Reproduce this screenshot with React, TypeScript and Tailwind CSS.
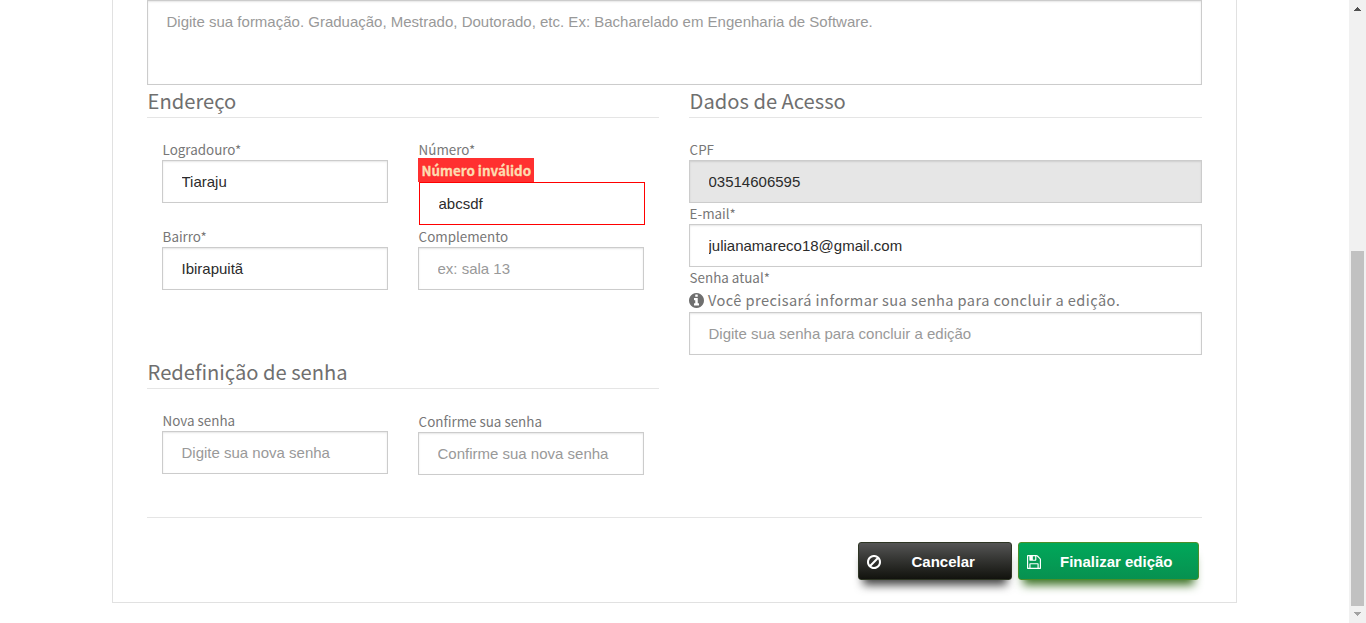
import React from "react";

const SANS = "font-['Noto_Sans_CJK_JP',sans-serif]";

function FaIcon({ d, className }: { d: string; className: string }) {
  return (
    <svg viewBox="0 128 1536 1536" fill="currentColor" className={className} aria-hidden="true">
      <path d={d} />
    </svg>
  );
}

const INFO =
  "M1024 1376v-160q0-14-9-23t-23-9h-96v-512q0-14-9-23t-23-9h-320q-14 0-23 9t-9 23v160q0 14 9 23t23 9h96v320h-96q-14 0-23 9t-9 23v160q0 14 9 23t23 9h448q14 0 23-9t9-23zM896 480v-160q0-14-9-23t-23-9h-192q-14 0-23 9t-9 23v160q0 14 9 23t23 9h192q14 0 23-9t9-23zM1536 896q0 209-103 385.5t-279.5 279.5-385.5 103-385.5-103-279.5-279.5-103-385.5 103-385.5 279.5-279.5 385.5-103 385.5 103 279.5 279.5 103 385.5z";
const BAN =
  "M1312 893q0-161-87-295l-754 753q137 89 297 89 111 0 211.5-43.5t173.5-116.5 116-174.5 43-212.5zM313 1192l755-754q-135-91-300-91-148 0-273 73t-198 199-73 274q0 162 89 299zM1536 893q0 157-61 300t-163.5 246-245 164-298.5 61-298.5-61-245-164-163.5-246-61-300 61-299.5 163.5-245.5 245-164 298.5-61 298.5 61 245 164 163.5 245.5 61 299.5z";
const SAVE =
  "M384 1536h768v-384h-768v384zM1280 1536h128v-896q0-14-10-38.5t-20-34.5l-281-281q-10-10-34-20t-39-10v416q0 40-28 68t-68 28h-576q-40 0-68-28t-28-68v-416h-128v1280h128v-416q0-40 28-68t68-28h832q40 0 68 28t28 68v416zM896 608v-320q0-13-9.5-22.5t-22.5-9.5h-192q-13 0-22.5 9.5t-9.5 22.5v320q0 13 9.5 22.5t22.5 9.5h192q13 0 22.5-9.5t9.5-22.5zM1536 640v928q0 40-28 68t-68 28h-1344q-40 0-68-28t-28-68v-1344q0-40 28-68t68-28h928q40 0 88 20t76 48l280 280q28 28 48 76t20 88z";

function Label({ children, short }: { children: React.ReactNode; short?: boolean }) {
  return (
    <label
      className={`${SANS} block whitespace-nowrap pl-[0.6px] text-[13.4px] leading-[21px] text-[#777] ${short ? "h-[19px]" : "h-[21px]"}`}
    >
      {children}
    </label>
  );
}

type InputProps = { value?: string; placeholder?: string; variant?: "normal" | "disabled" | "error" };

function Input({ value, placeholder, variant = "normal" }: InputProps) {
  const look = {
    normal: "border-[#ccc] bg-white shadow-[inset_0_1px_2px_rgba(0,0,0,0.1)]",
    disabled: "border-[#ccc] bg-[#e6e6e6] shadow-[inset_0_1px_2px_rgba(0,0,0,0.1)]",
    error: "border-[#f00] bg-white",
  }[variant];
  return (
    <input
      defaultValue={value}
      placeholder={placeholder}
      readOnly={variant === "disabled"}
      className={`block h-[43px] w-full rounded-none border px-[18.5px] font-['Liberation_Sans',sans-serif] text-[15px] text-[#2b2b2b] outline-none placeholder:text-[#999] ${look}`}
    />
  );
}

function Heading({ children }: { children: React.ReactNode }) {
  return (
    <h2
      className={`${SANS} h-[33px] whitespace-nowrap border-b border-[#e5e5e5] pl-[0.6px] text-[20.15px] leading-[32px] text-[#6f6f6f]`}
    >
      {children}
    </h2>
  );
}

export default function App() {
  return (
    <div className="flex h-[623px] w-full overflow-hidden bg-white">
      <div className="flex-1 pl-28">
        <main className="flex h-[603px] w-[1125px] flex-col border-x border-b border-[#e1e1e1] px-[34px]">
          <textarea
            placeholder="Digite sua formação. Graduação, Mestrado, Doutorado, etc. Ex: Bacharelado em Engenharia de Software."
            className="block h-[85px] w-full shrink-0 resize-none border border-[#ccc] px-[18.5px] py-[10px] font-['Liberation_Sans',sans-serif] text-[15px] leading-[22px] shadow-[inset_0_1px_2px_rgba(0,0,0,0.1)] outline-none placeholder:text-[#999]"
          />
          <div className="flex h-[432px] gap-[30px]">
            <div className="w-[512px]">
              <section>
                <Heading>Endereço</Heading>
                <div className="flex gap-[30px] px-[15px] pt-[21px]">
                  <div className="w-[226px]">
                    <Label>Logradouro*</Label>
                    <Input value="Tiaraju" />
                    <div className="pt-[23px]">
                      <Label>Bairro*</Label>
                      <Input value="Ibirapuitã" />
                    </div>
                  </div>
                  <div className="w-[226px]">
                    <Label short>Número*</Label>
                    <div
                      className={`${SANS} h-6 w-[116px] whitespace-nowrap bg-[#ff3030] pl-[3.5px] text-[13.4px] font-bold leading-[25px] text-[#fddcb0] [-webkit-text-stroke:0.3px_#fddcb0]`}
                    >
                      Número inválido
                    </div>
                    <div className="ml-px w-[226px]">
                      <Input value="abcsdf" variant="error" />
                    </div>
                    <div className="pt-px">
                      <Label>Complemento</Label>
                      <Input placeholder="ex: sala 13" />
                    </div>
                  </div>
                </div>
              </section>
              <section className="pt-[66px]">
                <Heading>Redefinição de senha</Heading>
                <div className="flex gap-[30px] px-[15px] pt-[21px]">
                  <div className="w-[226px]">
                    <Label>Nova senha</Label>
                    <Input placeholder="Digite sua nova senha" />
                  </div>
                  <div className="w-[226px] pt-px">
                    <Label>Confirme sua senha</Label>
                    <Input placeholder="Confirme sua nova senha" />
                  </div>
                </div>
              </section>
            </div>
            <section className="w-[513px]">
              <Heading>Dados de Acesso</Heading>
              <div className="pt-[21px]">
                <Label>CPF</Label>
                <Input value="03514606595" variant="disabled" />
                <Label>E-mail*</Label>
                <Input value="julianamareco18@gmail.com" />
                <Label>Senha atual*</Label>
                <p
                  className={`${SANS} flex h-6 items-center gap-1 whitespace-nowrap text-[14.6px] leading-6 tracking-[0.42px] text-[#777]`}
                >
                  <FaIcon d={INFO} className="size-[15px] text-[#6f6f6f]" />
                  Você precisará informar sua senha para concluir a edição.
                </p>
                <Input placeholder="Digite sua senha para concluir a edição" />
              </div>
            </section>
          </div>
          <div className="flex justify-end gap-1.5 border-t border-[#e5e5e5] pr-[3px] pt-6 font-['Liberation_Sans',sans-serif] text-[15px] font-bold text-white">
            <button className="flex h-[38px] w-[154px] items-center rounded-[3px] border border-[#2e3524] bg-linear-to-b from-[#555] to-[#12130e] pl-2 shadow-[0_10px_10px_-5px_rgba(0,0,0,0.75)]">
              <FaIcon d={BAN} className="mt-px size-[14px]" />
              <span className="pl-[30.5px] pt-0.5">Cancelar</span>
            </button>
            <button className="flex h-[38px] w-[181px] items-center rounded-[3px] border border-[#4b8f29] bg-linear-to-b from-[#00a85a] to-[#079150] pl-2 shadow-[0_10px_10px_-5px_#3e7327]">
              <FaIcon d={SAVE} className="mt-px size-[14px]" />
              <span className="pl-[19px] pt-0.5">Finalizar edição</span>
            </button>
          </div>
        </main>
      </div>
      <div className="flex w-[17px] flex-col items-center justify-between bg-[#f1f1f1]">
        <svg viewBox="0 0 17 17" className="size-[17px]" shapeRendering="crispEdges">
          <path d="M8 7h1v1h1v1h1v1h1v1H5v-1h1V9h1V8h1z" fill="#505050" />
        </svg>
        <div className="mt-auto h-[355px] w-[13px] bg-[#c1c1c1]" />
        <svg viewBox="0 0 17 17" className="size-[17px]" shapeRendering="crispEdges">
          <path d="M5 6h7v1h-1v1h-1v1H9v1H8V9H7V8H6V7H5z" fill="#a3a3a3" />
        </svg>
      </div>
    </div>
  );
}
